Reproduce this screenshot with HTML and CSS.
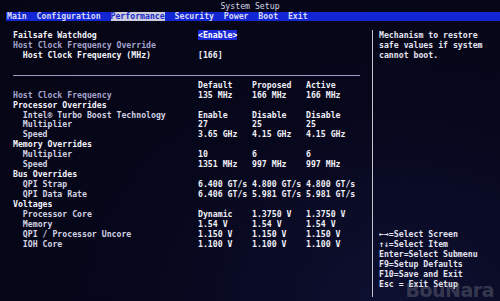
FILE: index.html
```html
<!DOCTYPE html>
<html>
<head>
<meta charset="utf-8">
<link rel="stylesheet" href="styles.css">
</head>
<body>
<div class="screen">
  <div class="title">System Setup</div>
  <nav class="menu">
    <span>Main</span><span>Configuration</span><span class="active">Performance</span><span>Security</span><span>Power</span><span>Boot</span><span>Exit</span>
  </nav>
  <div class="body">
    <section class="main">
      <div class="row"><span class="hd">Failsafe Watchdog</span><span><span class="sel">&lt;Enable&gt;</span></span></div>
      <div class="row"><span class="dim">Host Clock Frequency Override</span></div>
      <div class="row"><span class="hd in">Host Clock Frequency (MHz)</span><span class="v">[166]</span></div>
      <div class="row"></div>
      <div class="row"><hr class="rule"></div>
      <div class="row v"><span></span><span>Default</span><span>Proposed</span><span>Active</span></div>
      <div class="row v"><span class="dim">Host Clock Frequency</span><span>135 MHz</span><span>166 MHz</span><span>166 MHz</span></div>
      <div class="row"><span class="hd">Processor Overrides</span></div>
      <div class="row v"><span class="it in">Intel® Turbo Boost Technology</span><span>Enable</span><span>Disable</span><span>Disable</span></div>
      <div class="row v"><span class="it in">Multiplier</span><span>27</span><span>25</span><span>25</span></div>
      <div class="row v"><span class="it in">Speed</span><span>3.65 GHz</span><span>4.15 GHz</span><span>4.15 GHz</span></div>
      <div class="row"><span class="hd">Memory Overrides</span></div>
      <div class="row v"><span class="it in">Multiplier</span><span>10</span><span>6</span><span>6</span></div>
      <div class="row v"><span class="it in">Speed</span><span>1351 MHz</span><span>997 MHz</span><span>997 MHz</span></div>
      <div class="row"><span class="hd">Bus Overrides</span></div>
      <div class="row v"><span class="it in">QPI Strap</span><span>6.400 GT/s</span><span>4.800 GT/s</span><span>4.800 GT/s</span></div>
      <div class="row v"><span class="it in">QPI Data Rate</span><span>6.406 GT/s</span><span>5.981 GT/s</span><span>5.981 GT/s</span></div>
      <div class="row"><span class="hd">Voltages</span></div>
      <div class="row v"><span class="it in">Processor Core</span><span>Dynamic</span><span>1.3750 V</span><span>1.3750 V</span></div>
      <div class="row v"><span class="it in">Memory</span><span>1.54 V</span><span>1.54 V</span><span>1.54 V</span></div>
      <div class="row v"><span class="it in">QPI / Processor Uncore</span><span>1.150 V</span><span>1.150 V</span><span>1.150 V</span></div>
      <div class="row v"><span class="it in">IOH Core</span><span>1.100 V</span><span>1.100 V</span><span>1.100 V</span></div>
    </section>
    <aside class="help">
      <div class="desc">
        <div class="line">Mechanism to restore</div>
        <div class="line">safe values if system</div>
        <div class="line">cannot boot.</div>
      </div>
      <div class="keys">
        <div class="line">←→=Select Screen</div>
        <div class="line">↑↓=Select Item</div>
        <div class="line">Enter=Select Submenu</div>
        <div class="line">F9=Setup Defaults</div>
        <div class="line">F10=Save and Exit</div>
        <div class="line">Esc = Exit Setup</div>
      </div>
    </aside>
  </div>
  <div class="watermark">BoúNara</div>
</div>
</body>
</html>
```

FILE: styles.css
```css
html, body {
  margin: 0;
  padding: 0;
  background: #06061a;
}

.screen {
  position: relative;
  width: 500px;
  height: 301px;
  overflow: hidden;
  background: radial-gradient(ellipse at 80% 100%, #0d1030 0%, #07071c 45%, #050514 100%);
  font-family: "DejaVu Sans Mono", "Liberation Mono", monospace;
  font-size: 8.2px;
  font-weight: bold;
  color: #e8e8f4;
}

.title {
  padding-top: 1px;
  height: 10px;
  line-height: 10px;
  text-align: center;
  color: #d4d4e0;
  font-weight: normal;
}

.menu {
  display: flex;
  gap: 2ch;
  margin-top: 1px;
  margin-left: 6px;
  padding-left: 1px;
  height: 9px;
  line-height: 9px;
  background: #1226d4;
  color: #d6d8f4;
}

.menu .active {
  background: #ccccde;
  color: #1a2cc8;
}

.body {
  display: flex;
  margin-top: 9px;
  height: 267px;
}

.main {
  width: 359px;
  padding: 1px 0 0 13px;
}

.row {
  display: grid;
  grid-template-columns: 185px 54px 54px 54px;
  height: 9.95px;
  line-height: 9.95px;
  white-space: pre;
}

.row .rule {
  grid-column: 1 / -1;
  align-self: center;
  width: 347px;
  margin: 0;
  border: 0;
  border-top: 1px solid #9a9ac4;
}

.hd { color: #f4f4fc; }
.dim { color: #a4a4cc; }
.it { color: #d2d2e2; }
.in { padding-left: 2ch; }
.v { color: #f0f0f8; }

.sel {
  background: #1a2ad8;
  color: #ffffff;
}

.help {
  display: flex;
  flex-direction: column;
  justify-content: space-between;
  flex: 1;
  border-left: 1px solid #c4c4cc;
  padding: 1px 0 7px 6px;
  color: #e4e4f0;
}

.line {
  height: 9.95px;
  line-height: 9.95px;
  white-space: pre;
}

.watermark {
  position: absolute;
  right: 6px;
  bottom: 0;
  font-family: "DejaVu Sans", sans-serif;
  font-weight: bold;
  font-size: 19px;
  line-height: 22px;
  letter-spacing: -0.5px;
  color: rgba(160, 160, 170, 0.3);
  pointer-events: none;
}
```
